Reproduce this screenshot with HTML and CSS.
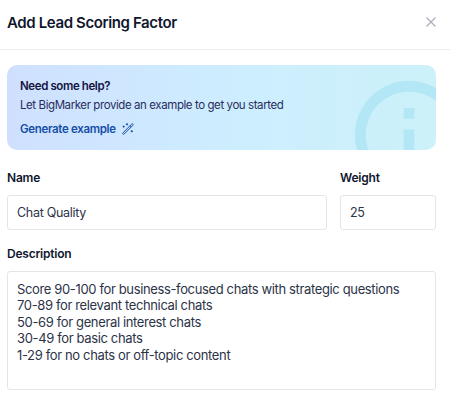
FILE: index.html
```html
<!DOCTYPE html>
<html lang="en">
<head>
  <meta charset="UTF-8" />
  <meta name="viewport" content="width=device-width, initial-scale=1.0"/>
  <title>Add Lead Scoring Factor</title>
  <link rel="stylesheet" href="styles.css">
</head>
<body>

  <header class="modal-header">
    <h1 class="modal-title">Add Lead Scoring Factor</h1>
    <button class="close-btn" type="button" aria-label="Close">
      <svg width="10" height="10" viewBox="0 0 10 10" fill="none" stroke="currentColor" stroke-width="1.2">
        <path d="M.5 .5l9 9M9.5 .5l-9 9"/>
      </svg>
    </button>
  </header>

  <main class="modal-body">
    <section class="help-banner">
      <h2 class="help-title">Need some help?</h2>
      <p class="help-text">Let BigMarker provide an example to get you started</p>
      <a class="help-link" href="#">
        <span>Generate example</span>
        <svg class="wand" width="12" height="12" viewBox="0 0 12 12" fill="none" stroke="currentColor">
          <path d="M.9 9.9l8.9-8.9a.7.7 0 0 1 1 0l.2.2a.7.7 0 0 1 0 1l-8.9 8.9a.7.7 0 0 1-1 0l-.2-.2a.7.7 0 0 1 0-1zM7.8 3l1.2 1.2"/>
          <path d="M5 .2v2.2M3.9 1.3h2.2M1.7 2.6v2M.7 3.6h2M9.8 7.2v2.2M8.7 8.3h2.2"/>
        </svg>
      </a>
      <svg class="info-icon" viewBox="0 0 24 24" fill="currentColor">
        <path d="M11 7h2v2h-2zM11 11h2v6h-2zM12 2a10 10 0 1 0 0 20a10 10 0 0 0 0-20zM12 20a8 8 0 1 1 0-16a8 8 0 0 1 0 16z"/>
      </svg>
    </section>

    <form class="factor-form">
      <div class="field">
        <label for="name">Name</label>
        <input type="text" id="name" name="name" value="Chat Quality">
      </div>
      <div class="field">
        <label for="weight">Weight</label>
        <input type="text" id="weight" name="weight" value="25">
      </div>
      <div class="field field-wide">
        <label for="description">Description</label>
        <textarea id="description" name="description" spellcheck="false">Score 90-100 for business-focused chats with strategic questions
70-89 for relevant technical chats
50-69 for general interest chats
30-49 for basic chats
1-29 for no chats or off-topic content</textarea>
      </div>
    </form>
  </main>

</body>
</html>
```
FILE: styles.css
```css
* {
  box-sizing: border-box;
}

body {
  margin: 0;
  font-family: Inter, "Liberation Sans", sans-serif;
  color: #0f172e;
  background: #fff;
}

.modal-header {
  display: flex;
  align-items: center;
  justify-content: space-between;
  height: 50px;
  padding: 0 14px 5px 7px;
  border-bottom: 1px solid #ededef;
}

.modal-title {
  margin: 0;
  font-size: 15px;
  font-weight: 600;
  letter-spacing: -0.38px;
}

.close-btn {
  display: flex;
  padding: 0;
  border: 0;
  background: none;
  color: #a9adba;
}

.modal-body {
  padding: 15px 14px 0 7px;
}

.help-banner {
  position: relative;
  height: 85px;
  padding: 13px 13px 0;
  overflow: hidden;
  border-radius: 10px;
  background: linear-gradient(90deg, #cfe0ff, #cdeeff 55%, #ccf1f9);
}

.help-title,
.help-text {
  margin: 0;
  font-size: 11.5px;
  line-height: 16px;
}

.help-title {
  font-weight: 600;
  letter-spacing: -0.4px;
  color: #15153f;
}

.help-text {
  margin-top: 3px;
  color: #2a2d5c;
  letter-spacing: -0.42px;
}

.help-link {
  display: flex;
  align-items: center;
  gap: 6px;
  margin-top: 8px;
  color: #134fa5;
  font-size: 11.5px;
  font-weight: 600;
  line-height: 16px;
  letter-spacing: -0.33px;
  text-decoration: none;
}

/* cropped by the banner edge */
.info-icon {
  position: absolute;
  top: 5px;
  right: -38px;
  width: 130px;
  height: 130px;
  color: #b4e7f6;
}

.factor-form {
  display: grid;
  grid-template-columns: 320px 96px;
  gap: 16px 13px;
  margin-top: 20px;
}

.field {
  display: flex;
  flex-direction: column;
  gap: 9px;
}

.field-wide {
  grid-column: 1 / -1;
}

label {
  font-size: 12px;
  font-weight: 600;
  line-height: 16px;
  letter-spacing: -0.22px;
}

input,
textarea {
  width: 100%;
  padding: 0 9px;
  border: 1px solid #e4e5e8;
  border-radius: 3px;
  outline: none;
  background: #fff;
  color: #2c3347;
  font-family: inherit;
  font-size: 12.5px;
  letter-spacing: -0.3px;
}

input {
  height: 35px;
}

textarea {
  display: block;
  height: 119px;
  padding-top: 9px;
  font-size: 13px;
  line-height: 16.4px;
  letter-spacing: -0.36px;
  resize: none;
  overflow: hidden;
}
```
